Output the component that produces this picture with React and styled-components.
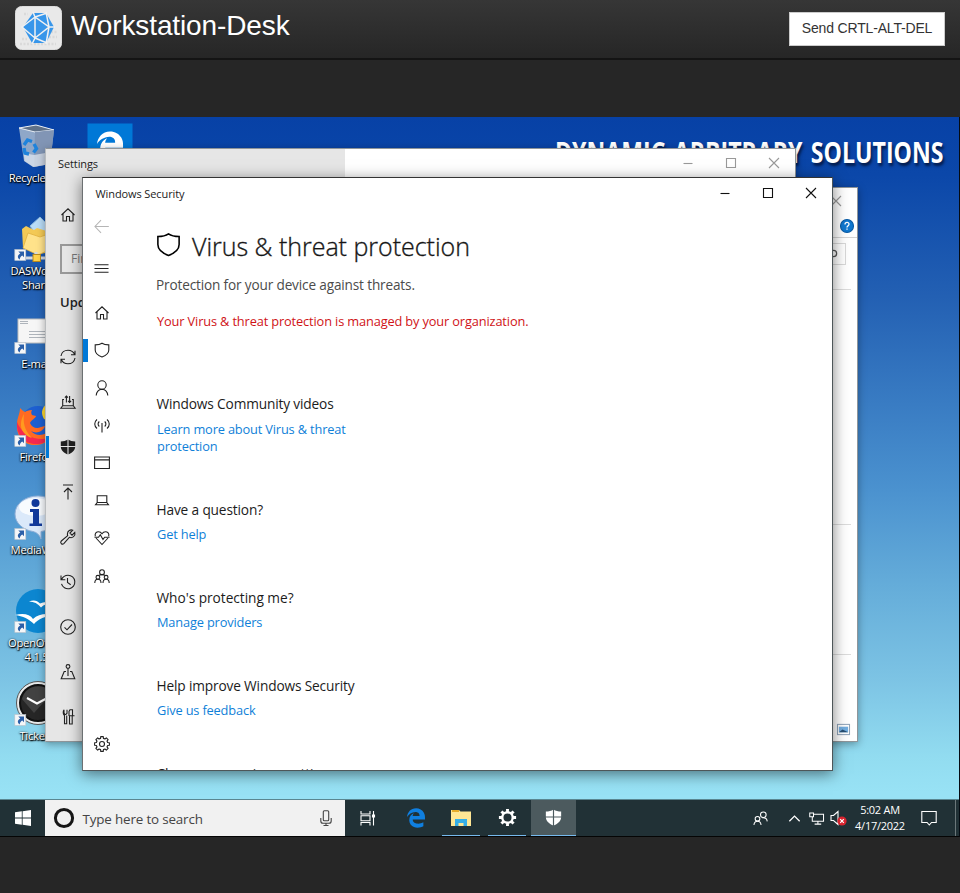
import React from 'react';
import styled, { createGlobalStyle } from 'styled-components';
import { FaEdgeLegacy } from 'react-icons/fa6';

const GlobalStyle = createGlobalStyle`
  *, *::before, *::after { box-sizing: border-box; }
  body { margin: 0; background: #262626; }
`;

const Page = styled.div`
  width: 960px;
  height: 893px;
  overflow: hidden;
  background: #262626;
  font-family: 'Open Sans', 'Noto Sans', sans-serif;
`;

const Header = styled.header`
  display: flex;
  align-items: flex-start;
  height: 60px;
  padding: 6px 15px 0;
  background: linear-gradient(#363636, #262626);
  border-bottom: 2px solid #141414;
  font-family: 'Liberation Sans', Arial, sans-serif;
`;

const Logo = styled.svg`
  width: 47px;
  height: 44px;
  flex: none;
`;

const Title = styled.h1`
  margin: 2px 0 0 9px;
  color: #fff;
  font-size: 28px;
  line-height: 36px;
  font-weight: 400;
  letter-spacing: -0.12px;
  white-space: nowrap;
`;

const SendButton = styled.button`
  width: 156px;
  height: 34px;
  margin: 6px 0 0 auto;
  padding: 0 0 2px;
  border: 1px solid #ccc;
  background: #fff;
  color: #333;
  font: 14px/30px 'Liberation Sans', Arial, sans-serif;
  letter-spacing: -0.17px;
  white-space: nowrap;
`;

const Screen = styled.main`
  position: relative;
  display: flex;
  flex-direction: column;
  height: 720px;
  margin-top: 57px;
  overflow: hidden;
  border-right: 1px solid #050b12;
  border-bottom: 1px solid #050505;
  background: linear-gradient(#0741a6 0%, #0b47a9 8%, #2360b3 25%, #397cc3 40%, #4b92cf 52%, #66aeda 66%, #7cc3e4 78%, #92dcf0 89%, #98e2f5 94%);
`;

const Desktop = styled.div`
  position: relative;
  height: 682px;
  flex: none;
`;

const Wordmark = styled.div`
  position: absolute;
  right: 16px;
  top: 16px;
  color: #fff;
  font: 700 29px/38px 'Open Sans', sans-serif;
  word-spacing: 3px;
  text-shadow: 2px 3px 3px #041c4c;
  white-space: nowrap;
  transform-origin: right center;
  transform: scaleX(0.797);
`;

const Shortcuts = styled.div`
  display: grid;
  grid-template-columns: 73px 73px;
  grid-template-rows: repeat(7, 93px);
  grid-auto-flow: column;
  padding-top: 6px;
`;

const Shortcut = styled.div`
  display: flex;
  flex-direction: column;
  align-items: center;
`;

const ShortcutArt = styled.svg`
  width: 46px;
  height: 46px;
  flex: none;
`;

const ShortcutLabel = styled.span`
  margin-top: 2px;
  color: #fff;
  font-size: 11.2px;
  line-height: 14px;
  font-weight: 500;
  letter-spacing: -0.25px;
  text-align: center;
  text-shadow: 0 1px 2px #000, 1px 1px 1px #000, 0 0 2px rgba(0, 0, 0, 0.6);
  white-space: pre;
`;

const Win = styled.section`
  position: absolute;
  left: ${(p) => p.$x}px;
  top: ${(p) => p.$y}px;
  width: ${(p) => p.$w}px;
  height: ${(p) => p.$h}px;
  display: flex;
  flex-direction: column;
  overflow: hidden;
  background: #fff;
  border: 1px solid ${(p) => (p.$active ? '#4e5659' : '#8f9599')};
  border-top-color: ${(p) => (p.$active ? '#333' : '#8f9599')};
  border-left-color: ${(p) => (p.$active ? '#6c7072' : '#b9bcbe')};
  box-shadow: ${(p) => (p.$active ? '0 3px 14px rgba(0,0,0,.5)' : '0 2px 8px rgba(0,0,0,.35)')};
`;

const TitleBar = styled.div`
  display: flex;
  align-items: center;
  height: ${(p) => p.$h || 30}px;
  flex: none;
  padding-left: ${(p) => p.$pad}px;
  background: ${(p) => p.$bg || '#fff'};
`;

const TitleText = styled.span`
  margin-top: ${(p) => p.$mt || 0}px;
  color: #1b1b1b;
  font-size: 11px;
  line-height: 16px;
  letter-spacing: -0.1px;
  white-space: nowrap;
`;

const Controls = styled.div`
  display: flex;
  margin-left: auto;
  color: ${(p) => (p.$active ? '#111' : '#999')};
`;

const Control = styled.span`
  display: flex;
  justify-content: center;
  width: 43px;
`;

const Glyph = styled.svg`
  width: ${(p) => p.$s || 16}px;
  height: ${(p) => p.$s || 16}px;
  flex: none;
  fill: none;
  stroke: currentColor;
  stroke-width: ${(p) => p.$sw || 1.1};
  display: block;
  overflow: visible;
`;

const Body = styled.div`
  display: flex;
  flex: 1;
  min-height: 0;
`;

const SettingsRail = styled.aside`
  width: 299px;
  flex: none;
  background: #e6e6e6;
  color: #222;
`;

const SettingsHome = styled.div`
  padding: 30px 0 0 14px;
  height: 67px;
`;

const FindBox = styled.div`
  width: 260px;
  height: 30px;
  margin-left: 14px;
  padding-left: 9px;
  border: 2px solid #999;
  color: #777;
  font-size: 12px;
  line-height: 26px;
`;

const SettingsHeading = styled.h2`
  margin: 17px 0 0 14px;
  height: 43px;
  font-size: 13px;
  line-height: 22px;
  font-weight: 600;
`;

const SettingsItem = styled.div`
  display: flex;
  align-items: center;
  height: 45px;
  padding-left: 13.5px;
  background: ${(p) => (p.$current ? 'linear-gradient(#0078d7,#0078d7) 0 50% / 3px 22px no-repeat' : 'none')};
`;

const Rail = styled.nav`
  width: 38px;
  flex: none;
  display: flex;
  flex-direction: column;
  color: #222;
`;

const RailItem = styled.div`
  display: flex;
  justify-content: center;
  align-items: center;
  height: ${(p) => p.$h || 37.5}px;
  flex: none;
  margin-top: ${(p) => p.$mt || 0}px;
  padding-right: ${(p) => p.$pr || 0}px;
  color: ${(p) => (p.$dim ? '#b5b5b5' : '#222')};
  background: ${(p) => (p.$current ? 'linear-gradient(#0078d7,#0078d7) 0 50% / 5px 23px no-repeat' : 'none')};
`;

const Content = styled.div`
  flex: 1;
  padding: 17px 0 0 35px;
  overflow: hidden;
`;

const HeadingRow = styled.div`
  display: flex;
  align-items: center;
  height: 38px;
`;

const Heading = styled.h2`
  margin: 3px 0 0 11px;
  color: #161616;
  font-size: 25px;
  line-height: 36px;
  font-weight: 300;
  letter-spacing: -0.02px;
  -webkit-text-stroke: 0.35px #161616;
  white-space: nowrap;
`;

const Lead = styled.p`
  margin: 12px 0 0;
  color: #4b4b4b;
  font-size: 13.6px;
  line-height: 20px;
  letter-spacing: -0.15px;
`;

const Notice = styled.p`
  margin: 16px 0 63px 1px;
  color: #d01317;
  font-size: 12.8px;
  line-height: 20px;
  letter-spacing: -0.14px;
`;

const Block = styled.section`
  height: ${(p) => p.$h || 88}px;
`;

const BlockTitle = styled.h3`
  margin: 0;
  padding-left: 0.5px;
  color: #1c1c1c;
  font-size: 13.7px;
  line-height: 20px;
  font-weight: 400;
  letter-spacing: ${(p) => p.$ls ?? -0.15}px;
`;

const BlockLink = styled.a`
  display: block;
  margin: ${(p) => p.$mt || 6}px 0 0 1px;
  color: #0f7fd8;
  font-size: 12.8px;
  line-height: 17px;
  letter-spacing: -0.16px;
  white-space: pre;
`;

const ExplorerHelp = styled.div`
  display: flex;
  justify-content: flex-end;
  align-items: center;
  height: 24px;
  padding-right: 3px;
  border-bottom: 1px solid #d4d4d4;
`;

const ExplorerSearch = styled.div`
  display: flex;
  justify-content: flex-end;
  align-items: center;
  width: 150px;
  height: 22px;
  margin: 5px 11px 0 auto;
  padding-right: 7px;
  border: 1px solid #d9d9d9;
  color: #555;
`;

const ExplorerLine = styled.div`
  height: 1px;
  margin: ${(p) => p.$mt}px 6px 0 0;
  background: #dcdcdc;
`;

const ExplorerFoot = styled.div`
  display: flex;
  justify-content: flex-end;
  padding-right: 7px;
  margin-top: auto;
  height: 18px;
`;

const Taskbar = styled.footer`
  display: flex;
  flex: 1;
  border-top: 1px solid #5a8791;
  background: #213136;
  color: #fff;
`;

const TaskButton = styled.div`
  display: flex;
  justify-content: center;
  align-items: center;
  width: ${(p) => p.$w || 45}px;
  margin-right: ${(p) => p.$mr || 0}px;
  background: ${(p) => (p.$active ? '#4c5a5e' : 'none')};
  border-bottom: ${(p) => (p.$open ? '1px solid #76b9ed' : '1px solid transparent')};
`;

const SearchBox = styled.div`
  display: flex;
  align-items: center;
  width: 300px;
  padding: 0 11px 0 8px;
  background: #f1f1f1;
  color: #444;
`;

const SearchHint = styled.span`
  margin: 1px auto 0 7.5px;
  font-size: 13.4px;
  letter-spacing: -0.16px;
  white-space: nowrap;
`;

const Tray = styled.div`
  display: flex;
  align-items: center;
  margin-left: auto;
`;

const TrayItem = styled.span`
  display: flex;
  justify-content: center;
  width: ${(p) => p.$w}px;
  margin-right: ${(p) => p.$mr || 0}px;
`;

const Clock = styled.div`
  display: flex;
  flex-direction: column;
  align-items: center;
  width: 50px;
  font-size: 11px;
  line-height: 16px;
  letter-spacing: -0.25px;
  white-space: nowrap;
`;

const ShowDesktop = styled.span`
  width: 4px;
  height: 100%;
  border-left: 1px solid #6b777a;
`;

const paths = {
  home: <path d="M1.5 8 8 1.8 14.5 8M3 7v7h3.5V9.5h3V14H13V7" />,
  shield: <path d="M8 1.2C6.3 2.4 3.8 2.9 1.2 2.9V8c0 3.4 3.4 5.700 6.800 7 3.400-1.300 6.800-3.600 6.800-7V2.900C12.200 2.900 9.700 2.400 8 1.200Z" />,
  person: <><circle cx="8" cy="5" r="4.200" /><path d="M2.200 15.500C2.500 11.500 4.500 9.500 8 9.200c3.500.3 5.500 2.300 5.800 6.300" /></>,
  antenna: <path d="M8 6v9.500M3 2.500C0 5 0 9 3 11.500M5.300 4.500c-1.600 1.500-1.600 3.500 0 5M13 2.500c3 2.500 3 6.500 0 9M10.700 4.500c1.600 1.500 1.600 3.500 0 5" />,
  window: <path d="M.6 2h14.800v11.500H.6zM.6 4.900h14.800" />,
  laptop: <path d="M3.200 3.800h9.600v6.700H3.200zM3.200 10.500l-1.700 2.300h13l-1.700-2.300" />,
  heart: <><path d="M2 8 8 14.500 14 8M1.300 6.300C.5 3.500 2.500 1.700 4.500 1.700 6.300 1.700 7.500 3 8 3.800c.5-.8 1.700-2.100 3.500-2.100 2 0 4 1.800 3.200 4.600" /><path d="M.5 7.300h4l1.800-2.500L9 9.500l1.600-2.200h5" /></>,
  family: <><circle cx="8" cy="3.200" r="2.400" /><circle cx="3.900" cy="8.300" r="1.900" /><circle cx="12.100" cy="8.300" r="1.900" /><path d="M.8 14c0-2.500 1.200-3.700 3.100-3.700S7 11.500 7 14M9 14c0-2.500 1.200-3.700 3.100-3.700s3.100 1.200 3.100 3.700M5 6.300C5.500 5.800 7 5.600 8 5.600s2.500.2 3 .7" /></>,
  sync: <path d="M1 7C1.500 3.500 4.500 1.200 8 1.200c3 0 5.500 1.600 6.700 4.300M15 9c-.5 3.500-3.500 5.800-7 5.800-3 0-5.500-1.600-6.700-4.300M15 1.700v4h-4M1 14.300v-4h4" />,
  delivery: <path d="M4 5.500H2.700v6.200h10.600V5.500H12M2.700 11.700.8 14.300h14.400l-1.900-2.600M6.400 8.500V2M4.900 3.600 6.400 2l1.500 1.600M9.600 2v6.500M8.100 6.900 9.600 8.500l1.500-1.600" />,
  defender: <path fill="currentColor" stroke="none" d="M8 .5C6 1.800 3.500 2.400.8 2.400V7.500c0 4 3.500 6.600 7.200 8 3.700-1.400 7.200-4 7.200-8V2.400C12.500 2.400 10 1.800 8 .5Z" />,
  up: <path d="M3 1h10M8 15.500V4M4 8l4-4 4 4" />,
  wrench: <path d="M14.800 3.300 12 6.100 9.900 4l2.800-2.800C10.500.3 7.500 1.800 7.400 5c0 .8.100 1.200.3 1.700L1.300 12c-1.700 1.700.8 4.200 2.500 2.600l5.500-6.300c3 1.300 6.500-1.300 5.500-5Z" />,
  history: <path d="M1.500 5.500C2.800 2.800 5.300 1.200 8 1.200a6.800 6.800 0 1 1-6.500 8.700M1 1.500v4.300h4.300M7.500 4v4.500l3.200 2.200" />,
  check: <><circle cx="8" cy="8" r="7.300" /><path d="m4.500 8.300 2.500 2.500 5-5.300" /></>,
  developer: <><circle cx="8" cy="2.500" r="1.900" /><path d="M8 4.400V12M6 7.500H4.200L1.200 14.800h13.600l-3-7.300H10" /></>,
  tools: <path d="M4 .8v3.400L5.200 5.500h.6L7 4.200V.8M4 .8C2.800 2.500 3 5.500 4.500 6.500v8.200h2.200V6.500M9 7V2.500L10 .8h2.500v6H9M9.500 7v8h2.700V6.800M9 6.800h5.500" />,
  back: <path d="M7.500 1.200 1 8l6.500 6.800M1 8h14.800" />,
  menu: <path d="M.5 4h15M.5 8h15M.5 12h15" />,
  min: <path d="M3.500 8.500h9" />,
  max: <path d="M3.500 3.500h9v9h-9z" />,
  close: <path d="m3 3 10 10M13 3 3 13" />,
  mic: <><rect x="5.300" y=".8" width="5.400" height="10" rx="1" /><path d="M2.800 8v3c0 1.500 1 2.300 2.300 2.300h5.800c1.300 0 2.300-.8 2.300-2.300V8M8 13.300v2.200M5.500 15.500h5" /></>,
  taskview: <><path d="M1 1v3h9V1M1 15.500v-3h9v3M1 5.800h9v5H1zM13.500 1v14.500" /><path fill="currentColor" d="M12.500 5h2v2h-2z" /></>,
  people: <><circle cx="11" cy="4" r="3" /><circle cx="4.800" cy="8.300" r="2.500" /><path d="M1 15c.3-2.800 1.500-4 3.800-4s3.500 1.200 3.800 4M9.700 7.200C12.800 6.700 14.800 8 15.200 11" /></>,
  chevron: <path d="m2.500 11 5.500-5.500 5.500 5.500" />,
  network: <path d="M5 3.500h10.500v7.500H3.500V7M9.500 11v3M6 14h7M.8 2.200h4v4h-4zM3.500 6.200V11" />,
  volume: <path d="M1 5.500h2.500L8 1.500v13L3.500 10.500H1z" />,
  action: <path d="M.8 1.500h14.400v11H10.500L8.300 15l-2.200-2.500H.8z" />,
  search: <><circle cx="9.500" cy="6.500" r="4.500" /><path d="m6 10-4 4" /></>,
};

const gearPoints = (inner, outer, a0, a1) => {
  const pts = [];
  for (let i = 0; i < 8; i += 1) {
    [[-a0, inner], [-a1, outer], [a1, outer], [a0, inner]].forEach(([da, r]) => {
      const a = (i * Math.PI) / 4 + da;
      pts.push(`${(8 + r * Math.sin(a)).toFixed(2)} ${(8 - r * Math.cos(a)).toFixed(2)}`);
    });
  }
  return `M${pts.join('L')}Z`;
};
paths.gear = <><path d={gearPoints(5.8, 7.5, 0.25, 0.17)} strokeLinejoin="round" /><circle cx="8" cy="8" r="2.500" /></>;
paths.gearSolid = (
  <path
    fill="currentColor"
    stroke="none"
    fillRule="evenodd"
    d={`${gearPoints(6, 8.2, 0.22, 0.17)}M8 4.200a3.800 3.800 0 1 0 0 7.600a3.800 3.800 0 1 0 0-7.600Z`}
  />
);

const Icon = ({ name, size, weight }) => (
  <Glyph viewBox="0 0 16 16" $s={size} $sw={weight}>{paths[name]}</Glyph>
);

const ShieldQuarters = ({ size, gap }) => (
  <Glyph viewBox="0 0 16 16" $s={size}>
    {paths.defender}
    <path d="M8 0v16M0 7.500h16" stroke={gap} strokeWidth="1.100" />
  </Glyph>
);

const LinkBadge = () => (
  <g>
    <rect x=".8" y="33.500" width="11" height="11" fill="#f4f6f8" stroke="#b9c1ca" strokeWidth=".6" />
    <path d="M4.300 35.500h5.700v5.700L8.300 39.500C6.600 40.500 5.800 41.700 5.800 43.500 2.800 41.500 3.600 39 6.300 37.500Z" fill="#2b5fa8" />
  </g>
);

const art = {
  bin: (
    <>
      <path d="m5 5 17-3 18 5-4 34-17 3-9-6Z" fill="#9fb2cc" opacity=".9" />
      <path d="m5 5 16 4 19-2L22 2Z" fill="#5f7188" stroke="#e8eef5" strokeWidth="1" />
      <path d="m21 9 19-2-4 34-16 3Z" fill="#8195b5" />
      <path d="m20 32 17-3-1.500 12-16 3-9-6-.8-8Z" fill="#dfe6ef" opacity=".75" />
      <g fill="none" stroke="#1f83dc" strokeWidth="3.400"><path d="m10 22 3.500-5 4.500 1.500M20 21l2.500 4.500-3 4M15 31l-4-1-1-5" /></g>
    </>
  ),
  edge: (
    <>
      <rect x=".5" y=".5" width="45" height="45.500" fill="#0078d7" />
      <g transform="translate(8.500 8)"><FaEdgeLegacy size={29} color="#fff" /></g>
    </>
  ),
  share: (
    <>
      <path d="m16 10 10-9 14 14-12 12Z" fill="#b9dcf7" stroke="#8dbbe2" />
      <path d="M8 13 12 10l8 4 3-2 16 5v19L24 38 9 32Z" fill="#f3c955" />
      <path d="m9 32 5-15 12 4 14-5-3 17-13 6Z" fill="#ffe28a" stroke="#dfad39" strokeWidth=".7" />
      <path d="M22 36v4M12 42h32" stroke="#d5d9dd" strokeWidth="3" />
      <rect x="19" y="38.500" width="7.500" height="7" fill="#ffd34a" stroke="#b98a1d" />
    </>
  ),
  mail: (
    <>
      <rect x="4" y="10" width="44" height="24" fill="#f6f6f6" stroke="#bbb" />
      <path d="M6 12.500h8M6 14.500h8M15 22.500h30M15 25.500h30M15 28.500h30" stroke="#aeb4bb" strokeWidth="1" />
    </>
  ),
  firefox: (
    <>
      <circle cx="24" cy="22" r="18" fill="#1d5fd0" />
      <path d="M33 2c-6 4-6 10-3 15l12 5c1-8-1-15-9-20Z" fill="#ffd92e" />
      <path d="M6 6c2 2 3 3 5 4 1-1 4-2 7-2-1 2-1 3 0 5l4 1c0 2-5 4-6 7 2 5 7 6 11 4l4-1c-2 6-9 8-14 5 5 6 15 5 20-2 1 11-8 17-17 16C9 43 2 33 3 22 3 16 6 12 6 6Z" fill="#ff6a22" />
      <path d="M3 20c-1 13 7 22 19 22 6 0 11-2 14-6C22 40 8 33 3 20Z" fill="#f5294f" />
      <path d="M10 12c-3 5-4 11-2 16 2 4 6 7 10 8C10 28 9 20 10 12Z" fill="#ff9a1f" />
    </>
  ),
  info: (
    <>
      <path d="M24 1C11 1 1 9 1 19c0 9 8 16 18 17.500 4 1 6 3 8 7.500V36.500C38 35 46 28 46 19 46 9 36 1 24 1Z" fill="#dbe9fa" stroke="#8eaed6" />
      <ellipse cx="22" cy="12" rx="17" ry="9" fill="#fff" opacity=".8" />
      <g fill="#123a9b"><circle cx="21.500" cy="8" r="4" /><path d="M16 14h9v14.500h3V31H15.500v-2.500H19V17h-3Z" /></g>
    </>
  ),
  office: (
    <>
      <circle cx="24" cy="23" r="22" fill="#0c86d0" />
      <path d="M15 13.500c5-2 8-1 11 2 4-2 8-2 12 0-5 0-8 1-11 4-3-4-7-6-12-6ZM1 27c8-2 15-1 18 4 5-5 13-6 23-4-11 1-18 4-22 9C15 31 9 28 1 27Z" fill="#fff" />
    </>
  ),
  clock: (
    <>
      <circle cx="24" cy="22" r="21.500" fill="#e9ebec" stroke="#555" />
      <circle cx="24" cy="22" r="18" fill="#262626" stroke="#111" strokeWidth="2" />
      <path d="M8 18A17 17 0 0 1 38 12L20 32Z" fill="#fff" opacity=".13" />
      <path d="m13 17 10 5.500 13-7" fill="none" stroke="#fff" strokeWidth="2" />
    </>
  ),
};

const shortcuts = [
  ['bin', 'Recycle Bin'],
  ['share', 'DASWorks\nShare', true],
  ['mail', 'E-mail', true],
  ['firefox', 'Firefox', true],
  ['info', 'MediaWiki', true],
  ['office', 'OpenOffice\n4.1.5', true],
  ['clock', 'Tickets', true],
  ['edge', ''],
];

const settingsSections = ['sync', 'delivery', 'defender', 'up', 'wrench', 'history', 'check', 'developer', 'tools'];
const securitySections = ['home', 'shield', 'person', 'antenna', 'window', 'laptop', 'heart'];

const WindowControls = ({ active }) => (
  <Controls $active={active}>
    {['min', 'max', 'close'].map((n) => <Control key={n}><Icon name={n} /></Control>)}
  </Controls>
);

const SettingsWindow = () => (
  <Win $x={45} $y={31} $w={751} $h={594}>
    <TitleBar $pad={12} $bg="linear-gradient(90deg,#e6e6e6 299px,#fff 299px)" $h={28}>
      <TitleText $mt={1}>Settings</TitleText>
      <WindowControls />
    </TitleBar>
    <Body>
      <SettingsRail>
        <SettingsHome><Icon name="home" /></SettingsHome>
        <FindBox>Find a setting</FindBox>
        <SettingsHeading>Update &amp; Security</SettingsHeading>
        {settingsSections.map((n) => (
          <SettingsItem key={n} $current={n === 'defender'}>
            {n === 'defender' ? <ShieldQuarters size={16} gap="#e6e6e6" /> : <Icon name={n} />}
          </SettingsItem>
        ))}
      </SettingsRail>
    </Body>
  </Win>
);

const ExplorerWindow = () => (
  <Win $x={400} $y={70} $w={458} $h={555}>
    <TitleBar $h={26}><WindowControls /></TitleBar>
    <ExplorerHelp>
      <Glyph viewBox="0 0 14 14" $s={14}>
        <circle cx="7" cy="7" r="6.500" fill="#0f78d0" stroke="#075aa5" />
        <path d="M5 5.500C5 2.700 9.200 2.800 9 5.300 8.900 6.700 7 6.700 7 8.500M7 9.600v1.200" stroke="#fff" strokeWidth="1.300" />
      </Glyph>
    </ExplorerHelp>
    <ExplorerSearch><Icon name="search" size={11} weight={1.8} /></ExplorerSearch>
    <ExplorerLine $mt={24} />
    <ExplorerLine $mt={234} />
    <ExplorerLine $mt={129} />
    <ExplorerFoot>
      <Glyph viewBox="0 0 14 12" $s={13}>
        <rect x=".5" y=".5" width="13" height="11" fill="#fff" stroke="#8fa3b8" />
        <rect x="2" y="3" width="10" height="6" fill="#73aee0" stroke="none" />
        <path d="m2 9 4-3 6 3Z" fill="#274f74" stroke="none" />
      </Glyph>
    </ExplorerFoot>
  </Win>
);

const SecurityWindow = () => (
  <Win $active $x={82} $y={60} $w={751} $h={594}>
    <TitleBar $pad={12.5}>
      <TitleText $mt={2}>Windows Security</TitleText>
      <WindowControls active />
    </TitleBar>
    <Body>
      <Rail>
        <RailItem $h={36} $pr={2} $dim><Icon name="back" size={15} /></RailItem>
        <RailItem $h={36} $mt={6} $pr={1}><Icon name="menu" size={15} /></RailItem>
        {securitySections.map((n, i) => (
          <RailItem key={n} $mt={i === 0 ? 8 : 0} $current={n === 'shield'}><Icon name={n} /></RailItem>
        ))}
        <RailItem $mt={2}><Icon name="family" /></RailItem>
        <RailItem $mt={129}><Icon name="gear" /></RailItem>
      </Rail>
      <Content>
        <HeadingRow>
          <Icon name="shield" size={25} weight={1} />
          <Heading>Virus &amp; threat protection</Heading>
        </HeadingRow>
        <Lead>Protection for your device against threats.</Lead>
        <Notice>Your Virus &amp; threat protection is managed by your organization.</Notice>
        <Block $h={106}>
          <BlockTitle>Windows Community videos</BlockTitle>
          <BlockLink $mt={7}>{'Learn more about Virus & threat\nprotection'}</BlockLink>
        </Block>
        <Block>
          <BlockTitle>Have a question?</BlockTitle>
          <BlockLink>Get help</BlockLink>
        </Block>
        <Block>
          <BlockTitle $ls={-0.03}>Who's protecting me?</BlockTitle>
          <BlockLink>Manage providers</BlockLink>
        </Block>
        <Block>
          <BlockTitle>Help improve Windows Security</BlockTitle>
          <BlockLink>Give us feedback</BlockLink>
        </Block>
        <Block>
          <BlockTitle>Change your privacy settings</BlockTitle>
        </Block>
      </Content>
    </Body>
  </Win>
);

export default function App() {
  return (
    <Page>
      <GlobalStyle />
      <Header>
        <Logo viewBox="0 0 47 44">
          <rect x=".5" y=".5" width="46" height="43" rx="6" fill="#e9e9e9" stroke="#dcdcdc" />
          <path d="M5 38h36M7 33h5M34 31h8M36 26h6M9 8h4" stroke="#dadada" strokeWidth="2.500" strokeDasharray="2 1.500" />
          <path d="M18 7h13l8 14-8 16H17L8 21Z" fill="#3796ea" />
          <path
            d="M20 11v21l14-11ZM20 11l-2-5M20 11l12-4M20 11 7 21l13 11M20 32l-3 6M20 32l12 5M34 21 31 6M34 21h6M34 21l-3 17"
            fill="none"
            stroke="#f1f1f1"
            strokeWidth="1.500"
          />
        </Logo>
        <Title>Workstation-Desk</Title>
        <SendButton>Send CRTL-ALT-DEL</SendButton>
      </Header>
      <Screen>
        <Desktop>
          <Wordmark>DYNAMIC ARBITRARY SOLUTIONS</Wordmark>
          <Shortcuts>
            {shortcuts.map(([kind, label, link]) => (
              <Shortcut key={kind}>
                <ShortcutArt viewBox="0 0 46 46">{art[kind]}{link && <LinkBadge />}</ShortcutArt>
                <ShortcutLabel>{label}</ShortcutLabel>
              </Shortcut>
            ))}
          </Shortcuts>
          <ExplorerWindow />
          <SettingsWindow />
          <SecurityWindow />
        </Desktop>
        <Taskbar>
          <TaskButton>
            <Glyph viewBox="0 0 16 16"><path fill="#fff" stroke="none" d="M0 2.200 6.800 1.300v6.300H0ZM7.600 1.200 16 0v7.600H7.600ZM0 8.400h6.800v6.300L0 13.800ZM7.600 8.400H16V16l-8.400-1.200Z" /></Glyph>
          </TaskButton>
          <SearchBox>
            <Glyph viewBox="0 0 22 22" $s={22}><circle cx="11" cy="11" r="8.600" stroke="#161616" strokeWidth="3" /></Glyph>
            <SearchHint>Type here to search</SearchHint>
            <Icon name="mic" />
          </SearchBox>
          <TaskButton $mr={3}><Icon name="taskview" /></TaskButton>
          <TaskButton $mr={4}><FaEdgeLegacy size={20} color="#0f7fe0" /></TaskButton>
          <TaskButton $open $w={38} $mr={8}>
            <Glyph viewBox="0 0 20 18" $s={20}>
              <path d="M0 1h8l1.500 1.500H20V17H0Z" fill="#ffe694" stroke="none" />
              <path d="M1 1h7v2H1Z" fill="#e6ab29" stroke="none" />
              <path d="M4 17v-7h12v7h-3.500v-3h-5v3Z" fill="#36aee6" stroke="none" />
            </Glyph>
          </TaskButton>
          <TaskButton $open $w={38} $mr={5}><Icon name="gearSolid" size={17} /></TaskButton>
          <TaskButton $open $active><ShieldQuarters size={17} gap="#4c5a5e" /></TaskButton>
          <Tray>
            <TrayItem $w={42}><Icon name="people" size={15} /></TrayItem>
            <TrayItem $w={26}><Icon name="chevron" size={15} weight={1.4} /></TrayItem>
            <TrayItem $w={19}><Icon name="network" size={15} /></TrayItem>
            <TrayItem $w={24} $mr={5}>
              <Glyph viewBox="0 0 16 16">
                {paths.volume}
                <circle cx="12" cy="11" r="4.600" fill="#d8232e" stroke="none" />
                <path d="m10.200 9.200 3.600 3.600M13.800 9.200l-3.600 3.600" stroke="#fff" strokeWidth="1.200" />
              </Glyph>
            </TrayItem>
            <Clock><span>5:02 AM</span><span>4/17/2022</span></Clock>
            <TrayItem $w={48} $mr={2}><Icon name="action" /></TrayItem>
            <ShowDesktop />
          </Tray>
        </Taskbar>
      </Screen>
    </Page>
  );
}
